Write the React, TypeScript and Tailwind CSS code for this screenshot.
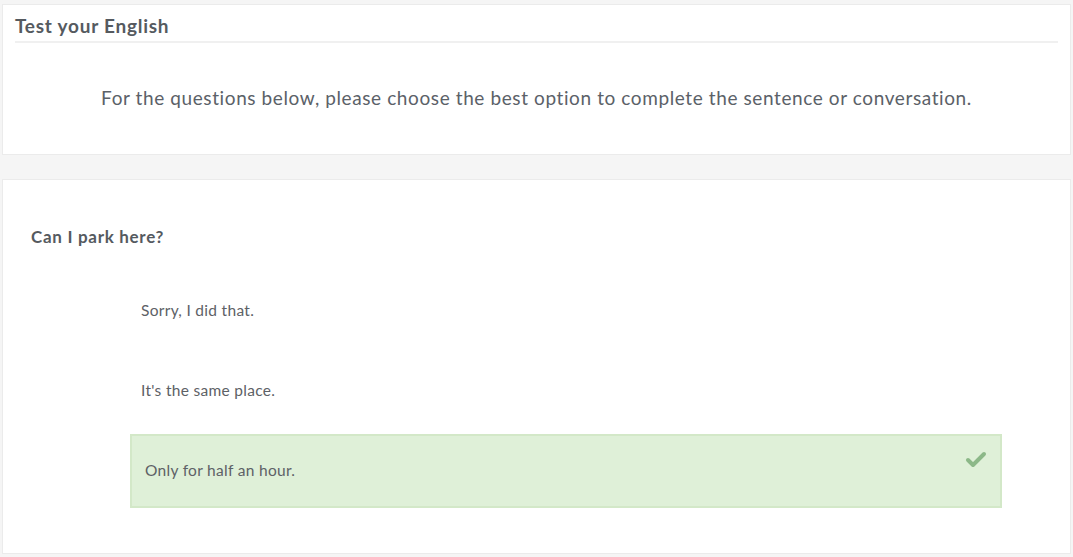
import { Check } from 'lucide-react'

const options = [
  { text: 'Sorry, I did that.', correct: false },
  { text: "It's the same place.", correct: false },
  { text: 'Only for half an hour.', correct: true },
]

function App() {
  return (
    <div className="min-h-screen bg-[#f5f5f5] px-[2px] pt-[4px] font-['Lato',sans-serif] text-[#555a5f]">
      <div className="border border-[#ebebeb] bg-white px-[12px] pb-[44px] pt-[9px]">
        <h2 className="border-b-2 border-[#f0f0f0] pb-[3px] text-[19px] font-bold leading-[24px] tracking-[0.75px]">
          Test your English
        </h2>
        <p className="mt-[43px] text-center text-[19px] leading-[24px] tracking-[0.6px] text-[#5b6168]">
          For the questions below, please choose the best option to complete the sentence or conversation.
        </p>
      </div>

      <div className="mt-[24px] border border-[#ebebeb] bg-white pb-[45px] pl-[28px] pr-[68px] pt-[45px]">
        <h3 className="text-[17px] font-bold leading-[24px] tracking-[0.7px]">Can I park here?</h3>
        <div className="mt-[25px] flex flex-col gap-[6px] pl-[99px] text-[#5d6166]">
          {options.map((o) => (
            <div
              key={o.text}
              className={
                o.correct
                  ? 'relative flex h-[74px] items-center border-2 border-[#d3e8c8] bg-[#dff0d8] px-[13px] text-[15.5px] tracking-[0.3px]'
                  : 'flex h-[74px] items-center px-[11px] text-[15.5px] tracking-[0.3px]'
              }
            >
              {o.text}
              {o.correct && (
                <Check className="absolute right-[12px] top-[12px] h-[24px] w-[24px] text-[#8cb888]" strokeWidth={4} />
              )}
            </div>
          ))}
        </div>
      </div>
    </div>
  )
}

export default App
